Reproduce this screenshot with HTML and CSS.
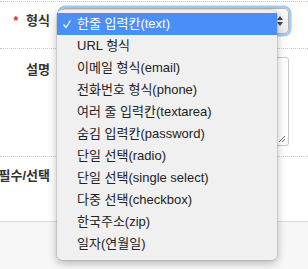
FILE: index.html
```html
<!DOCTYPE html>
<html lang="ko">
<head>
<meta charset="utf-8">
<link rel="stylesheet" href="styles.css">
</head>
<body>
<div class="page">
  <div class="form">
    <div class="row row-type">
      <div class="label"><span class="req">*</span>형식</div>
      <div class="field">
        <div class="select">
          <svg class="arrows" width="8" height="12" viewBox="0 0 8 12"><path d="M4 1 L7 5 L1 5 Z M4 11 L7 7 L1 7 Z" fill="#444"/></svg>
        </div>
      </div>
    </div>
    <div class="row row-desc">
      <div class="label">설명</div>
      <div class="field">
        <div class="textarea">
          <svg class="grip" width="8" height="8" viewBox="0 0 8 8"><path d="M1 7 L7 1 M4 7 L7 4" stroke="#666" stroke-width="1" fill="none"/></svg>
        </div>
      </div>
    </div>
    <div class="row row-req">
      <div class="label">필수/선택</div>
      <div class="field"></div>
    </div>
  </div>
  <div class="footer"></div>

  <ul class="menu">
    <li class="item selected"><svg class="check" width="10" height="10" viewBox="0 0 10 10"><path d="M1.5 5.5 L4 8.5 L8.5 1.5" stroke="#fff" stroke-width="1.3" fill="none"/></svg>한줄 입력칸(text)</li>
    <li class="item">URL 형식</li>
    <li class="item">이메일 형식(email)</li>
    <li class="item">전화번호 형식(phone)</li>
    <li class="item">여러 줄 입력칸(textarea)</li>
    <li class="item">숨김 입력칸(password)</li>
    <li class="item">단일 선택(radio)</li>
    <li class="item">단일 선택(single select)</li>
    <li class="item">다중 선택(checkbox)</li>
    <li class="item">한국주소(zip)</li>
    <li class="item">일자(연월일)</li>
  </ul>
</div>
</body>
</html>
```

FILE: styles.css
```css
html, body {
  margin: 0;
  padding: 0;
  background: #fff;
}
body {
  font-family: "Liberation Sans", "Noto Sans CJK KR", sans-serif;
  font-size: 13px;
  color: #333;
}
.page {
  position: relative;
  width: 308px;
  height: 269px;
  overflow: hidden;
  padding-top: 1px;
  box-sizing: border-box;
  display: flex;
  flex-direction: column;
}
.form {
  border-top: 1px dotted #c8c8c8;
}
.row {
  display: grid;
  grid-template-columns: 50px 1fr;
  column-gap: 10px;
  padding-right: 19px;
  align-items: start;
}
.row-type, .row-desc {
  border-bottom: 1px dotted #c8c8c8;
}
.label {
  display: flex;
  justify-content: flex-end;
  align-items: center;
  font-weight: bold;
  line-height: 16px;
  color: #333;
  white-space: nowrap;
}
.req {
  color: #e0262b;
  font-size: 12px;
  margin-right: 8px;
}
.row-type {
  height: 47px;
  box-sizing: border-box;
  padding-top: 6px;
}
.row-type .label {
  padding-top: 5px;
}
.select {
  position: relative;
  height: 26px;
  box-sizing: border-box;
  border: 1px solid #b4b4b4;
  border-radius: 5px;
  background: linear-gradient(#fafafa, #ececec);
  box-shadow: 0 0 0 2.5px #9fcbf8;
}
.arrows {
  position: absolute;
  right: 4px;
  top: 6px;
}
.row-desc {
  height: 108px;
  box-sizing: border-box;
  padding-top: 8px;
}
.row-desc .label {
  padding-top: 5px;
}
.textarea {
  position: relative;
  height: 89px;
  box-sizing: border-box;
  border: 1px solid #c8c8c8;
  border-radius: 3px;
  background: #fff;
}
.grip {
  position: absolute;
  right: 2px;
  bottom: 2px;
}
.row-req {
  height: 64px;
  box-sizing: border-box;
  padding-top: 11px;
}
.footer {
  flex: 1;
  border-top: 1px solid #dcdcdc;
  background: #f7f7f7;
}
.menu {
  position: absolute;
  left: 57px;
  top: 10px;
  width: 220px;
  height: 250px;
  box-sizing: border-box;
  margin: 0;
  padding: 3px 0 5px;
  list-style: none;
  background: #f0f0f0;
  border-radius: 5px;
  box-shadow: 0 0 0 0.5px rgba(0,0,0,0.18), 0 3px 10px rgba(0,0,0,0.28);
}
.item {
  position: relative;
  height: 22px;
  line-height: 22px;
  padding-left: 20px;
  color: #222;
  font-size: 13px;
  white-space: nowrap;
}
.item.selected {
  background: #4a8ff7;
  color: #fff;
}
.check {
  position: absolute;
  left: 5px;
  top: 6px;
}
```
